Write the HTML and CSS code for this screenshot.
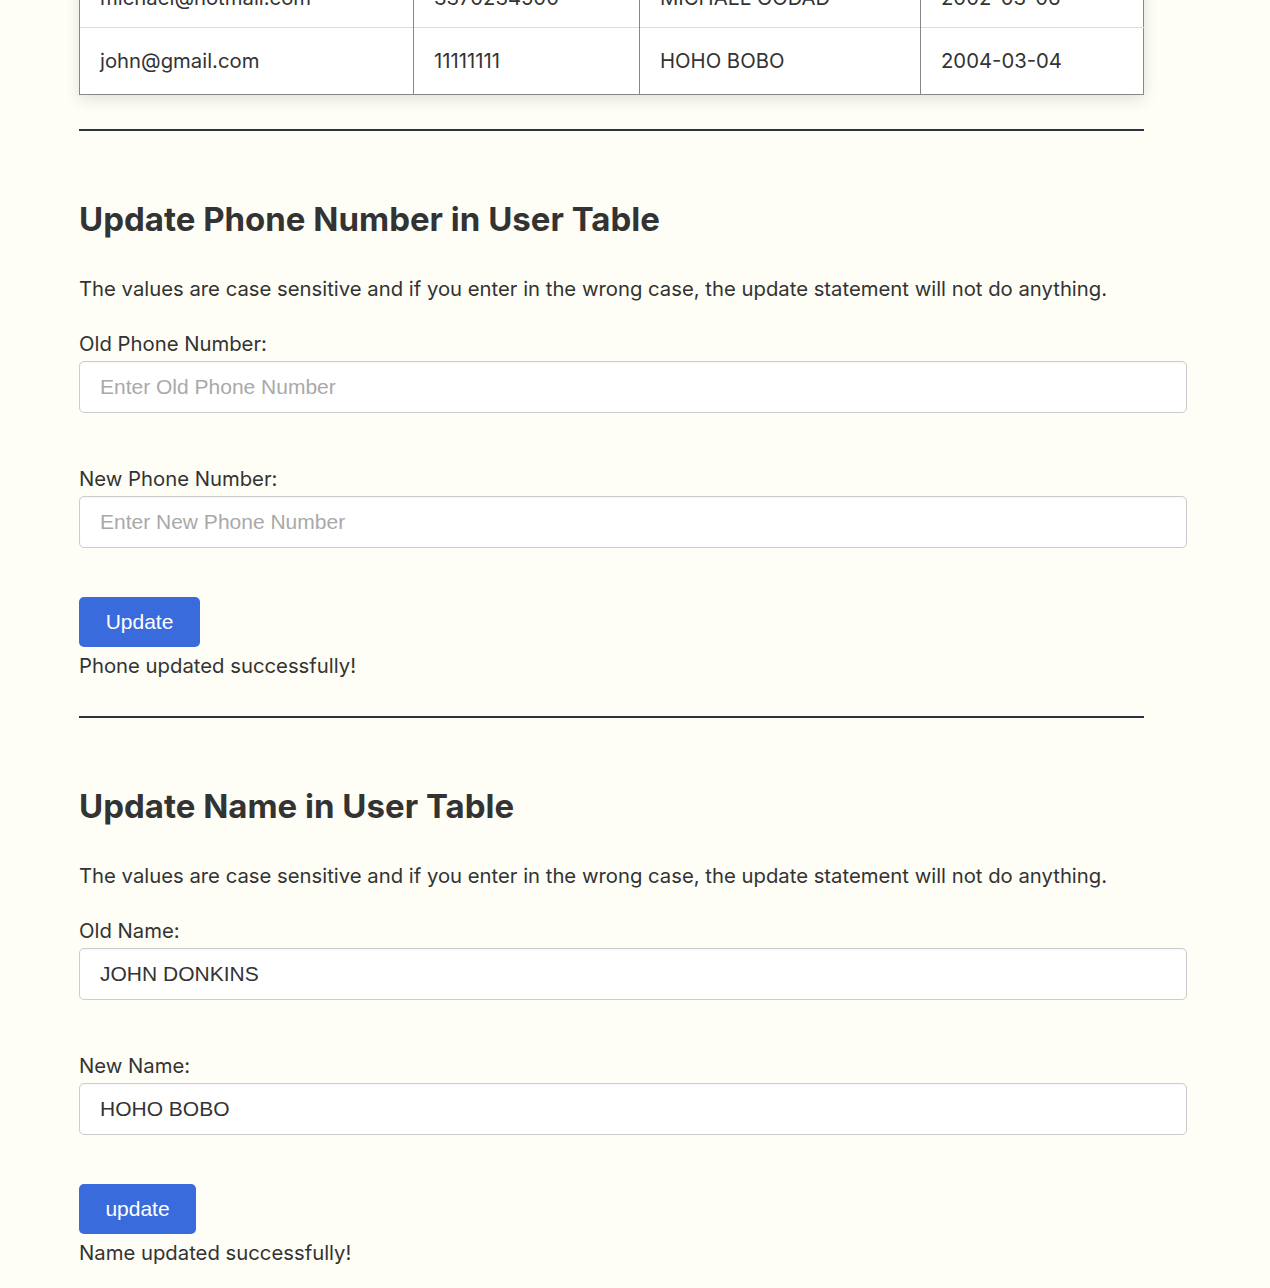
FILE: index.html
```html
<!DOCTYPE html>
<html lang="en">
<head>
<meta charset="utf-8">
<title>User Table</title>
<link rel="stylesheet" href="styles.css">
</head>
<body>
<main class="page">
  <div class="table-wrap">
    <table class="users">
      <tbody>
        <tr class="row-cut">
          <td class="c1">michael@hotmail.com</td>
          <td class="c2">3370234500</td>
          <td class="c3">MICHAEL GODAD</td>
          <td class="c4">2002-03-06</td>
        </tr>
        <tr>
          <td class="c1">john@gmail.com</td>
          <td class="c2">11111111</td>
          <td class="c3">HOHO BOBO</td>
          <td class="c4">2004-03-04</td>
        </tr>
      </tbody>
    </table>
  </div>

  <hr class="rule">

  <section class="section">
    <h2 class="title">Update Phone Number in User Table</h2>
    <p class="note">The values are case sensitive and if you enter in the wrong case, the update statement will not do anything.</p>
    <label class="label">Old Phone Number:</label>
    <input class="field" type="text" placeholder="Enter Old Phone Number">
    <label class="label label-next">New Phone Number:</label>
    <input class="field" type="text" placeholder="Enter New Phone Number">
    <button class="btn btn-phone">Update</button>
    <p class="msg">Phone updated successfully!</p>
  </section>

  <hr class="rule">

  <section class="section">
    <h2 class="title">Update Name in User Table</h2>
    <p class="note">The values are case sensitive and if you enter in the wrong case, the update statement will not do anything.</p>
    <label class="label">Old Name:</label>
    <input class="field" type="text" value="JOHN DONKINS">
    <label class="label label-next">New Name:</label>
    <input class="field" type="text" value="HOHO BOBO">
    <button class="btn btn-name">update</button>
    <p class="msg">Name updated successfully!</p>
  </section>
</main>
</body>
</html>
```
FILE: styles.css
```css
html, body {
  margin: 0;
  padding: 0;
  background: #fefef6;
}
body {
  font-family: Inter, "Noto Sans", sans-serif;
  color: #333333;
  font-size: 20.3px;
  overflow: hidden;
  height: 1288px;
}
.page {
  width: 1065px;
  padding-left: 79px;
  display: flex;
  flex-direction: column;
}
.table-wrap {
  margin-top: -40px;
}
.users {
  width: 1065px;
  border-collapse: collapse;
  background: #ffffff;
  box-shadow: 0 4px 14px rgba(0, 0, 0, 0.12);
  border: 1px solid #888888;
}
.users td {
  height: 67px;
  padding: 0 20px;
  box-sizing: border-box;
  font-size: 20.3px;
  line-height: 24px;
  border-left: 1px solid #888888;
  border-top: 1px solid #dddddd;
  color: #333333;
}
.users .row-cut td {
  padding-top: 8px;
}
.users .c1 { width: 334px; }
.users .c2 { width: 226px; }
.users .c3 { width: 281px; }
.rule {
  width: 1065px;
  margin: 34px 0 0 0;
  border: 0;
  height: 2px;
  background: #2d3340;
}
.section {
  display: flex;
  flex-direction: column;
  align-items: flex-start;
}
.title {
  margin: 70px 0 0 0;
  font-size: 33px;
  line-height: 36px;
  font-weight: 700;
  color: #333333;
}
.note {
  margin: 38px 0 0 0;
  line-height: 27px;
}
.label {
  margin-top: 28px;
  line-height: 27px;
}
.label-next {
  margin-top: 52px;
}
.field {
  margin-top: 4px;
  width: 1066px;
  box-sizing: content-box;
  padding: 0 20px;
  height: 50px;
  border: 1px solid #cccccc;
  border-radius: 5px;
  background: #ffffff;
  font-family: "Liberation Sans", Arial, sans-serif;
  font-size: 21px;
  color: #333333;
  box-shadow: inset 0 1px 2px rgba(0, 0, 0, 0.04);
}
.field::placeholder {
  color: #a9a9a9;
}
.btn {
  margin-top: 49px;
  height: 50px;
  border: 0;
  border-radius: 5px;
  background: #3a6bdc;
  color: #ffffff;
  font-family: "Liberation Sans", Arial, sans-serif;
  font-size: 21px;
  padding: 0;
}
.btn-phone { width: 121px; }
.btn-name { width: 117px; }
.msg {
  margin: 5px 0 3px 0;
  line-height: 27px;
}
```
